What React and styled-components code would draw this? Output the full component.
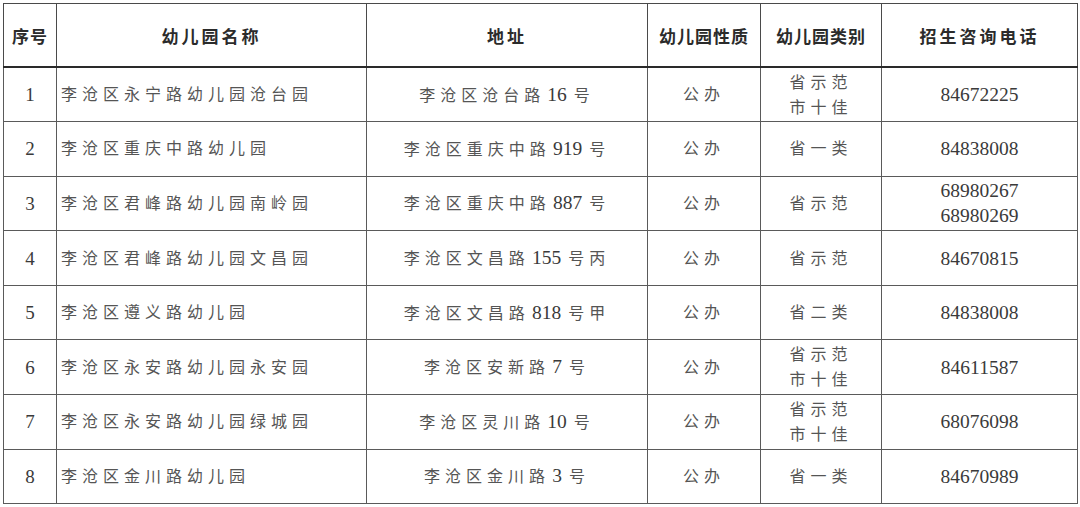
import React from 'react';
import styled, { createGlobalStyle } from 'styled-components';

const GlobalStyle = createGlobalStyle`
  html, body {
    margin: 0;
    padding: 0;
    background: #ffffff;
  }
  body {
    font-family: "Liberation Serif", "Noto Sans CJK SC", serif;
  }
`;

const rows = [
  { no: 1, name: '李沧区永宁路幼儿园沧台园', addr: ['李沧区沧台路', '16', '号'], kind: '公办', cat: ['省示范', '市十佳'], tel: ['84672225'] },
  { no: 2, name: '李沧区重庆中路幼儿园', addr: ['李沧区重庆中路', '919', '号'], kind: '公办', cat: ['省一类'], tel: ['84838008'] },
  { no: 3, name: '李沧区君峰路幼儿园南岭园', addr: ['李沧区重庆中路', '887', '号'], kind: '公办', cat: ['省示范'], tel: ['68980267', '68980269'] },
  { no: 4, name: '李沧区君峰路幼儿园文昌园', addr: ['李沧区文昌路', '155', '号丙'], kind: '公办', cat: ['省示范'], tel: ['84670815'] },
  { no: 5, name: '李沧区遵义路幼儿园', addr: ['李沧区文昌路', '818', '号甲'], kind: '公办', cat: ['省二类'], tel: ['84838008'] },
  { no: 6, name: '李沧区永安路幼儿园永安园', addr: ['李沧区安新路', '7', '号'], kind: '公办', cat: ['省示范', '市十佳'], tel: ['84611587'] },
  { no: 7, name: '李沧区永安路幼儿园绿城园', addr: ['李沧区灵川路', '10', '号'], kind: '公办', cat: ['省示范', '市十佳'], tel: ['68076098'] },
  { no: 8, name: '李沧区金川路幼儿园', addr: ['李沧区金川路', '3', '号'], kind: '公办', cat: ['省一类'], tel: ['84670989'] },
];

const widths = [53, 310, 281, 113, 121, 196];

const App = () => (
  <>
    <GlobalStyle />
    <Page>
      <Table>
        <colgroup>
          {widths.map((w, i) => (
            <col key={i} style={{ width: w }} />
          ))}
        </colgroup>
        <thead>
          <tr>
            <HeadCell $spacing="1px">序号</HeadCell>
            <HeadCell>幼儿园名称</HeadCell>
            <HeadCell>地址</HeadCell>
            <HeadCell $spacing="1px">幼儿园性质</HeadCell>
            <HeadCell $spacing="1px">幼儿园类别</HeadCell>
            <HeadCell>招生咨询电话</HeadCell>
          </tr>
        </thead>
        <tbody>
          {rows.map((r) => (
            <Row key={r.no}>
              <NumCell>{r.no}</NumCell>
              <NameCell>{r.name}</NameCell>
              <Cell>
                {r.addr[0]}
                <Num>{r.addr[1]}</Num>
                {r.addr[2]}
              </Cell>
              <Cell>{r.kind}</Cell>
              <Cell>
                {r.cat.map((c) => (
                  <Line key={c}>{c}</Line>
                ))}
              </Cell>
              <TelCell>
                {r.tel.map((t) => (
                  <Line key={t}>{t}</Line>
                ))}
              </TelCell>
            </Row>
          ))}
        </tbody>
      </Table>
    </Page>
  </>
);

export default App;

const Page = styled.div`
  padding: 3px 3px 0 3px;
  width: 1080px;
  box-sizing: border-box;
`;

const Table = styled.table`
  border-collapse: collapse;
  table-layout: fixed;
  width: 1074px;
  border: 1.5px solid #4a4a4a;
`;

const HeadCell = styled.th`
  height: 62px;
  padding: 0;
  border: 1.5px solid #4a4a4a;
  border-bottom: 2px solid #2a2a2a;
  font-family: "Noto Sans CJK SC", sans-serif;
  font-weight: 700;
  font-size: 17px;
  letter-spacing: ${(p) => p.$spacing || '3px'};
  color: #2b2b2b;
  text-align: center;
  vertical-align: middle;
`;

const Row = styled.tr`
  height: 54.6px;
`;

const Cell = styled.td`
  padding: 0;
  border: 1.5px solid #5a5a5a;
  font-family: "Liberation Serif", "Noto Sans CJK SC", serif;
  font-size: 16px;
  letter-spacing: 5px;
  color: #555555;
  text-align: center;
  vertical-align: middle;
  line-height: 25px;
  white-space: nowrap;
`;

const NameCell = styled(Cell)`
  text-align: left;
  padding-left: 4px;
`;

const NumCell = styled(Cell)`
  font-size: 19px;
  letter-spacing: 0;
  color: #3a3a3a;
`;

const TelCell = styled(Cell)`
  font-size: 19.5px;
  letter-spacing: 0;
  color: #3a3a3a;
`;

const Num = styled.span`
  font-size: 19.5px;
  letter-spacing: 0;
  margin: 0 7px 0 2px;
  color: #3a3a3a;
`;

const Line = styled.div`
  display: block;
`;
